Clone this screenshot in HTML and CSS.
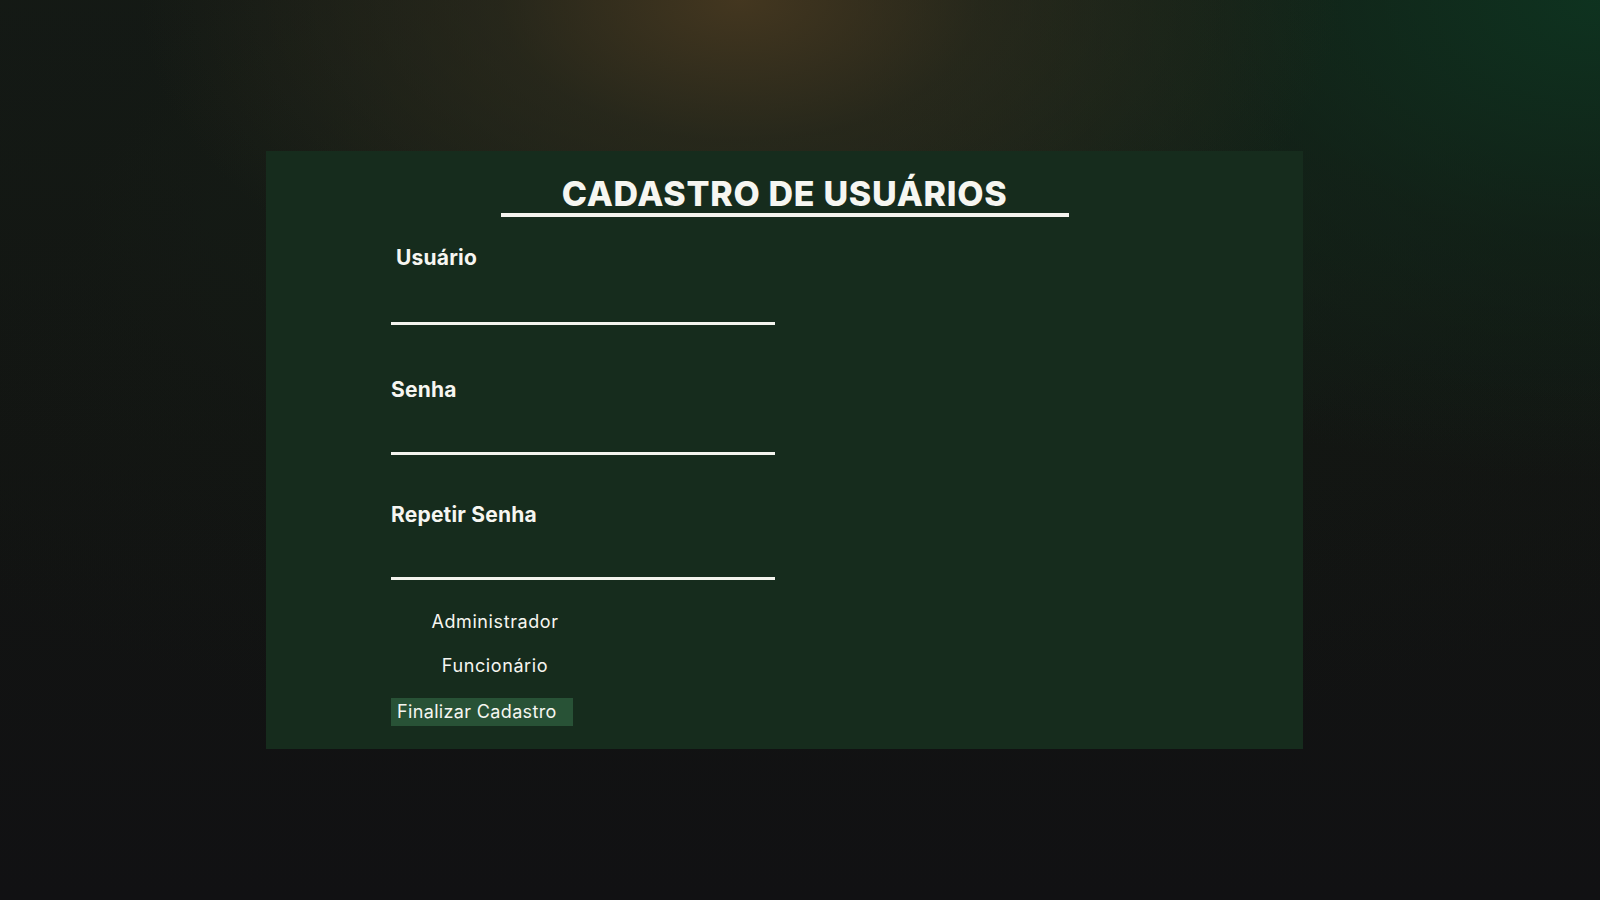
FILE: index.html
```html
<!DOCTYPE html>
<html lang="pt-BR">
<head>
<meta charset="utf-8">
<title>Cadastro de Usuários</title>
<link rel="stylesheet" href="styles.css">
</head>
<body>
<main class="page">
  <section class="card">
    <div class="title-wrap">
      <h1 class="title">CADASTRO DE USUÁRIOS</h1>
    </div>
    <form class="form">
      <div class="field field--first">
        <label class="label label--indent" for="usuario">Usuário</label>
        <input class="input" id="usuario" type="text">
      </div>
      <div class="field field--middle">
        <label class="label" for="senha">Senha</label>
        <input class="input" id="senha" type="password">
      </div>
      <div class="field field--last">
        <label class="label" for="senha2">Repetir Senha</label>
        <input class="input" id="senha2" type="password">
      </div>
      <div class="roles">
        <label class="role"><input class="radio" type="radio" name="tipo" value="admin">Administrador</label>
        <label class="role"><input class="radio" type="radio" name="tipo" value="func">Funcionário</label>
      </div>
      <button class="submit" type="button">Finalizar Cadastro</button>
    </form>
  </section>
</main>
</body>
</html>
```

FILE: styles.css
```css
html, body {
  margin: 0;
  padding: 0;
  height: 100%;
}
body {
  font-family: Inter, "Open Sans", sans-serif;
  color: #f6f6f1;
  background-color: #111213;
  background-image:
    radial-gradient(ellipse 600px 350px at 740px 0px, rgba(70, 56, 32, 0.95) 0%, rgba(50, 46, 30, 0.6) 40%, rgba(30, 34, 24, 0) 100%),
    radial-gradient(ellipse 760px 480px at 1600px 0px, rgba(14, 52, 32, 0.95) 0%, rgba(16, 40, 26, 0.55) 50%, rgba(16, 30, 22, 0) 100%),
    radial-gradient(ellipse 1200px 560px at 800px 200px, rgba(24, 34, 24, 0.85) 0%, rgba(20, 26, 20, 0.35) 60%, rgba(17, 18, 19, 0) 100%),
    linear-gradient(180deg, #141915 0%, #121412 50%, #111113 100%);
  background-repeat: no-repeat;
  min-height: 900px;
}
.page {
  padding: 151px 0 0 266px;
}
.card {
  width: 1037px;
  box-sizing: border-box;
  height: 598px;
  background: #162c1d;
  padding-top: 24px;
}
.title-wrap {
  text-align: center;
  margin-bottom: 28px;
}
.title {
  display: inline-block;
  width: 568px;
  margin: 0;
  font-size: 34px;
  line-height: 38px;
  font-weight: 800;
  letter-spacing: 0.7px;
  border-bottom: 4px solid #f4f4ee;
  text-align: center;
}
.form {
  padding-left: 125px;
  display: flex;
  flex-direction: column;
  align-items: flex-start;
}
.field {
  display: flex;
  flex-direction: column;
  width: 384px;
}
.field--first {
  margin-bottom: 52px;
}
.field--first .input {
  height: 54px;
}
.field--middle {
  margin-bottom: 47px;
}
.label {
  font-size: 21px;
  line-height: 26px;
  font-weight: 700;
  letter-spacing: 0.2px;
}
.label--indent {
  padding-left: 5px;
}
.input {
  height: 52px;
  box-sizing: border-box;
  background: transparent;
  border: none;
  border-bottom: 3px solid #f4f4ee;
  color: #fff;
  font: inherit;
  outline: none;
  padding: 0;
}
.roles {
  width: 208px;
  margin-top: 30px;
  display: flex;
  flex-direction: column;
  gap: 20px;
}
.role {
  text-align: center;
  font-size: 18px;
  line-height: 24px;
  font-weight: 400;
  letter-spacing: 0.6px;
}
.radio {
  position: absolute;
  opacity: 0;
  width: 0;
  height: 0;
  margin: 0;
}
.submit {
  margin-top: 20px;
  width: 182px;
  height: 28px;
  padding: 0 0 0 6px;
  text-align: left;
  border: none;
  background: #285236;
  color: #f6f6f1;
  font-family: Inter, "Open Sans", sans-serif;
  font-size: 18px;
  line-height: 28px;
  letter-spacing: 0.35px;
}
```
